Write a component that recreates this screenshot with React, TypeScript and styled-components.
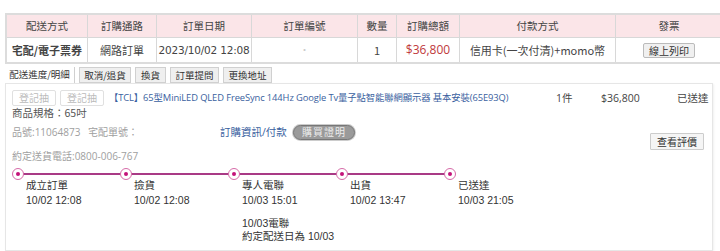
import React from "react"
import styled, { createGlobalStyle } from "styled-components"

const GlobalStyle = createGlobalStyle`
  body {
    margin: 0;
    background: #fff;
    font-family: "Noto Sans CJK TC", "Noto Sans", sans-serif;
    color: #333;
  }
`

const Page = styled.div`
  width: 720px;
  padding: 13px 7px 0 5px;
  box-sizing: border-box;
`

const OrderTable = styled.table`
  width: 708px;
  border-collapse: collapse;
  border: 2px solid #dcdcdc;
  table-layout: fixed;
  font-size: 11px;
  line-height: 14px;
`

const Th = styled.th<{ w: number }>`
  width: ${(p) => p.w}px;
  height: 22px;
  background: #fbe5e8;
  font-weight: normal;
  color: #444;
  border: 1px solid #d8d8d8;
  padding: 0;
  text-align: center;
  font-size: 10.5px;
`

const Td = styled.td<{ bold?: boolean; red?: boolean }>`
  height: 24px;
  border: 1px solid #d8d8d8;
  padding: 0;
  text-align: center;
  font-weight: ${(p) => (p.bold ? "bold" : "normal")};
  color: ${(p) => (p.red ? "#c0393b" : "#444")};
  font-family: ${(p) =>
    p.red ? '"Open Sans", "Noto Sans CJK TC", sans-serif' : "inherit"};
  font-size: ${(p) => (p.red ? "12px" : "11px")};
  white-space: nowrap;
`

const DateCell = styled(Td)`
  font-family: "DejaVu Sans", "Noto Sans CJK TC", sans-serif;
  font-size: 10.5px;
  letter-spacing: -0.2px;
`

const PrintBtn = styled.button`
  font-family: inherit;
  font-size: 10px;
  padding: 0 5px;
  height: 15px;
  line-height: 13px;
  background: #f0f0f0;
  border: 1px solid #bbb;
  border-radius: 2px;
  color: #333;
`

const Tabs = styled.div`
  display: flex;
  gap: 4px;
  margin-top: 3px;
  align-items: flex-end;
  height: 16px;
`

const Tab = styled.div<{ active?: boolean; w: number }>`
  width: ${(p) => p.w}px;
  height: 16px;
  box-sizing: border-box;
  font-size: 9.5px;
  line-height: 14px;
  text-align: center;
  white-space: nowrap;
  color: #333;
  background: ${(p) => (p.active ? "#fff" : "#efefef")};
  border: ${(p) => (p.active ? "none" : "1px solid #d0d0d0")};
  border-right: 1px solid #d0d0d0;
  border-bottom: ${(p) => (p.active ? "none" : "1px solid #d0d0d0")};
`

const Panel = styled.div`
  width: 708px;
  height: 168px;
  box-sizing: border-box;
  border: 1px solid #e6e6e6;
  box-shadow: 1px 1px 2px rgba(0, 0, 0, 0.06);
  padding: 5px 8px 0 6px;
  font-size: 10.5px;
  line-height: 14px;
`

const ItemRow = styled.div`
  display: flex;
  align-items: center;
  height: 17px;
  white-space: nowrap;
`

const GhostBtn = styled.span`
  display: inline-block;
  flex-shrink: 0;
  height: 16px;
  line-height: 14px;
  box-sizing: border-box;
  padding: 0 6px;
  border: 1px solid #e0e0e0;
  border-radius: 2px;
  color: #bbb;
  font-size: 10px;
  margin-right: 4px;
`

const ProductLink = styled.a`
  flex-shrink: 0;
  color: #3a5fa0;
  text-decoration: none;
  font-family: "Open Sans", "Noto Sans CJK TC", sans-serif;
  font-size: 9.35px;
  width: 447px;
  margin-left: 1px;
  white-space: nowrap;
  letter-spacing: -0.1px;
`

const Cell = styled.span<{ w: number }>`
  flex-shrink: 0;
  width: ${(p) => p.w}px;
  font-family: "Open Sans", "Noto Sans CJK TC", sans-serif;
  color: #444;
  font-size: 10.5px;
`

const Spec = styled.div`
  margin-top: -1px;
  color: #555;
  height: 16px;
  line-height: 16px;
`

const InfoRow = styled.div`
  display: flex;
  align-items: center;
  height: 18px;
  margin-top: 2px;
  white-space: nowrap;
  font-family: "Open Sans", "Noto Sans CJK TC", sans-serif;
`

const Gray = styled.span<{ w: number }>`
  width: ${(p) => p.w}px;
  color: #a0a0a0;
  font-size: 10px;
`

const BlueLink = styled.a`
  color: #3a5fa0;
  font-size: 10.5px;
  width: 73px;
`

const Pill = styled.span`
  display: inline-block;
  width: 62px;
  height: 15px;
  line-height: 13px;
  box-sizing: border-box;
  border-radius: 8px;
  background: #9a9a9a;
  border: 1px solid #777;
  box-shadow: 0 0 0 1px #ccc;
  color: #eee;
  text-align: center;
  font-size: 10px;
  letter-spacing: 1px;
`

const ReviewRow = styled.div`
  display: flex;
  justify-content: flex-end;
  margin-top: -8px;
  height: 17px;
`

const ReviewBtn = styled.span`
  display: inline-block;
  height: 17px;
  line-height: 15px;
  box-sizing: border-box;
  padding: 0 6px;
  border: 1px solid #ccc;
  background: #f5f5f5;
  font-size: 10px;
  color: #333;
  border-radius: 1px;
`

const Phone = styled.div`
  color: #a0a0a0;
  font-size: 10px;
  font-family: "Open Sans", "Noto Sans CJK TC", sans-serif;
  margin-top: -2px;
  height: 16px;
  line-height: 16px;
`

const Timeline = styled.div`
  display: flex;
  margin-top: 4px;
`

const Step = styled.div`
  width: 108px;
  flex-shrink: 0;
`

const Track = styled.div`
  position: relative;
  height: 12px;
`

const Dot = styled.span`
  position: absolute;
  left: 0;
  top: 0;
  width: 12px;
  height: 12px;
  box-sizing: border-box;
  border-radius: 50%;
  border: 1.5px solid #d66aa8;
  background: #fff;
  z-index: 1;
  &::after {
    content: "";
    position: absolute;
    left: 2.5px;
    top: 2.5px;
    width: 4px;
    height: 4px;
    border-radius: 50%;
    background: #c4127a;
  }
`

const Line = styled.span`
  position: absolute;
  left: 10px;
  top: 5px;
  width: 100px;
  height: 2px;
  background: #a93a86;
`

const StepText = styled.div`
  padding-left: 14px;
  font-family: "Liberation Sans", "Noto Sans CJK TC", sans-serif;
  font-size: 10.5px;
  color: #333;
  line-height: 13px;
  white-space: nowrap;
`

const Title = styled.div`
  margin-top: -1px;
`

const Time = styled.div`
  margin-top: 2px;
`

const Note = styled.div`
  margin-top: 10px;
`

type StepData = { title: string; time: string; note?: string[] }

const steps: StepData[] = [
  { title: "成立訂單", time: "10/02  12:08" },
  { title: "撿貨", time: "10/02  12:08" },
  {
    title: "專人電聯",
    time: "10/03  15:01",
    note: ["10/03電聯", "約定配送日為 10/03"],
  },
  { title: "出貨", time: "10/02  13:47" },
  { title: "已送達", time: "10/03  21:05" },
]

const headers: [string, number][] = [
  ["配送方式", 80],
  ["訂購通路", 68],
  ["訂單日期", 94],
  ["訂單編號", 105],
  ["數量", 38],
  ["訂購總額", 62],
  ["付款方式", 155],
  ["發票", 106],
]

const tabs: [string, number][] = [
  ["配送進度/明細", 70],
  ["取消/退貨", 52],
  ["換貨", 31],
  ["訂單提問", 49],
  ["更換地址", 49],
]

export default function App() {
  return (
    <Page>
      <GlobalStyle />
      <OrderTable>
        <thead>
          <tr>
            {headers.map(([h, w]) => (
              <Th key={h} w={w}>
                {h}
              </Th>
            ))}
          </tr>
        </thead>
        <tbody>
          <tr>
            <Td bold>宅配/電子票券</Td>
            <Td>網路訂單</Td>
            <DateCell>2023/10/02 12:08</DateCell>
            <Td style={{ color: "#ccc" }}>˙</Td>
            <Td>1</Td>
            <Td red>$36,800</Td>
            <Td>信用卡(一次付清)+momo幣</Td>
            <Td>
              <PrintBtn>線上列印</PrintBtn>
            </Td>
          </tr>
        </tbody>
      </OrderTable>

      <Tabs>
        {tabs.map(([t, w], i) => (
          <Tab key={t} w={w} active={i === 0}>
            {t}
          </Tab>
        ))}
      </Tabs>

      <Panel>
        <ItemRow>
          <GhostBtn>登記抽</GhostBtn>
          <GhostBtn>登記抽</GhostBtn>
          <ProductLink>
            【TCL】65型MiniLED QLED FreeSync 144Hz Google Tv量子點智能聯網顯示器 基本安裝(65E93Q)
          </ProductLink>
          <Cell w={45}>1件</Cell>
          <Cell w={76}>$36,800</Cell>
          <Cell w={30}>已送達</Cell>
        </ItemRow>
        <Spec>商品規格：65吋</Spec>
        <InfoRow>
          <Gray w={76}>品號:11064873</Gray>
          <Gray w={132}>宅配單號：</Gray>
          <BlueLink>訂購資訊/付款</BlueLink>
          <Pill>購買證明</Pill>
        </InfoRow>
        <ReviewRow>
          <ReviewBtn>查看評價</ReviewBtn>
        </ReviewRow>
        <Phone>約定送貨電話:0800-006-767</Phone>
        <Timeline>
          {steps.map((s, i) => (
            <Step key={s.title}>
              <Track>
                <Dot />
                {i < steps.length - 1 && <Line />}
              </Track>
              <StepText>
                <Title>{s.title}</Title>
                <Time>{s.time}</Time>
                {s.note && (
                  <Note>
                    {s.note.map((n) => (
                      <div key={n}>{n}</div>
                    ))}
                  </Note>
                )}
              </StepText>
            </Step>
          ))}
        </Timeline>
      </Panel>
    </Page>
  )
}
